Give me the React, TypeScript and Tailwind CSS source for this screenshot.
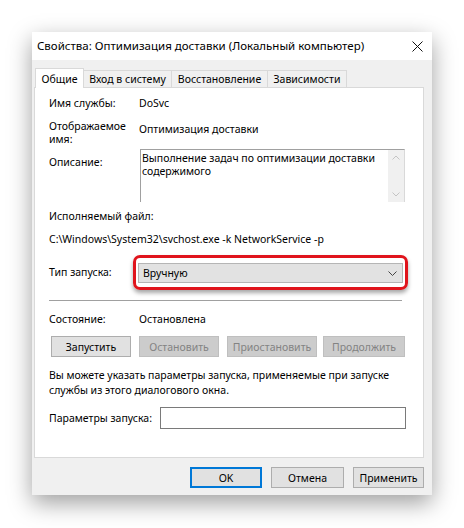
import React from "react";

function Btn({ label, w, disabled, primary }: { label: string; w: string; disabled?: boolean; primary?: boolean }) {
  return (
    <div
      className={`${w} h-[21px] flex items-center justify-center whitespace-nowrap ${
        primary
          ? "border-2 border-[#0078d7] bg-[#e1e1e1] text-black"
          : disabled
          ? "border border-[#bfbfbf] bg-[#cccccc] text-[#838383]"
          : "border border-[#adadad] bg-[#e1e1e1] text-black"
      }`}
    >
      {label}
    </div>
  );
}

export default function App() {
  return (
    <div className="w-[464px] h-[528px] bg-white overflow-hidden text-[10.5px] text-black font-['Noto_Sans',sans-serif] leading-[16px]">
      <div className="ml-[32px] mt-[32px] w-[400px] h-[463px] bg-[#f0f0f0] shadow-[0_8px_22px_rgba(0,0,0,0.38)] flex flex-col">
        {/* title bar */}
        <div className="h-[28px] bg-white flex items-center justify-between pl-[5px] pr-[9px] text-[11.5px]">
          <span className="whitespace-nowrap">Свойства: Оптимизация доставки (Локальный компьютер)</span>
          <svg width="11" height="11" viewBox="0 0 11 11">
            <path d="M0.5 0.5 L10.5 10.5 M10.5 0.5 L0.5 10.5" stroke="#111" strokeWidth="1" />
          </svg>
        </div>

        {/* tabs */}
        <div className="mt-[8px] ml-[3px] flex items-end h-[20px] relative z-10 whitespace-nowrap">
          <div className="w-[49px] h-[20px] bg-white border border-b-0 border-[#d9d9d9] flex items-center justify-center">Общие</div>
          <div className="w-[88px] h-[18px] border border-l-0 border-[#d9d9d9] flex items-center justify-center">Вход в систему</div>
          <div className="w-[96px] h-[18px] border border-l-0 border-[#d9d9d9] flex items-center justify-center">Восстановление</div>
          <div className="w-[79px] h-[18px] border border-l-0 border-[#d9d9d9] flex items-center justify-center">Зависимости</div>
        </div>

        {/* panel */}
        <div className="-mt-[1px] ml-[2px] w-[390px] h-[371px] bg-white border border-[#d9d9d9] pl-[14px] flex flex-col">
          <div className="mt-[7px] flex h-[16px] whitespace-nowrap">
            <div className="w-[90px]">Имя службы:</div>
            <div>DoSvc</div>
          </div>

          <div className="mt-[9px] flex whitespace-nowrap">
            <div className="w-[90px] leading-[13px]">
              Отображаемое
              <br />
              имя:
            </div>
            <div className="mt-[1px]">Оптимизация доставки</div>
          </div>

          <div className="mt-[3px] flex">
            <div className="w-[91px] mt-[5px] whitespace-nowrap">Описание:</div>
            <div className="w-[265px] h-[53px] border border-[#a0a0a0] border-r-[#d9d9d9] border-b-0 flex">
              <div className="flex-1 pl-[1px] pt-[2px] leading-[13px]">
                Выполнение задач по оптимизации доставки содержимого
              </div>
              <div className="w-[16px] bg-[#f0f0f0] flex flex-col items-center justify-between py-[5px]">
                <svg width="8" height="5" viewBox="0 0 8 5">
                  <path d="M0.5 4.5 L4 1 L7.5 4.5" fill="none" stroke="#c4c4c4" strokeWidth="1" />
                </svg>
                <svg width="8" height="5" viewBox="0 0 8 5">
                  <path d="M0.5 0.5 L4 4 L7.5 0.5" fill="none" stroke="#c4c4c4" strokeWidth="1" />
                </svg>
              </div>
            </div>
          </div>

          <div className="mt-[6px] h-[16px]">Исполняемый файл:</div>
          <div className="mt-[7px] h-[16px] whitespace-nowrap">C:\Windows\System32\svchost.exe -k NetworkService -p</div>

          <div className="mt-[8px] flex items-center">
            <div className="w-[84px] mt-[-1px] whitespace-nowrap">Тип запуска:</div>
            <div className="w-[275px] h-[35px] border-[3px] border-[#e0141c] rounded-[7px] pt-[5px] pb-[4px] px-[2px] shadow-[0_3px_4px_rgba(0,0,0,0.35)]">
              <div className="h-[20px] bg-[#e2e2e2] border border-[#b5b5b5] flex items-center justify-between pl-[4px] pr-[5px]">
                <span>Вручную</span>
                <svg width="9" height="5" viewBox="0 0 9 5">
                  <path d="M0.5 0.5 L4.5 4.5 L8.5 0.5" fill="none" stroke="#444" strokeWidth="1" />
                </svg>
              </div>
            </div>
          </div>

          <div className="mt-[10px] w-[353px] h-[1px] bg-[#a0a0a0]" />

          <div className="mt-[10px] flex h-[16px] whitespace-nowrap">
            <div className="w-[90px]">Состояние:</div>
            <div>Остановлена</div>
          </div>

          <div className="mt-[9px] ml-[2px] flex">
            <Btn label="Запустить" w="w-[80px]" />
            <div className="w-[8px]" />
            <Btn label="Остановить" w="w-[80px]" disabled />
            <div className="w-[8px]" />
            <Btn label="Приостановить" w="w-[90px]" disabled />
            <div className="w-[6px]" />
            <Btn label="Продолжить" w="w-[82px]" disabled />
          </div>

          <div className="mt-[11px] leading-[15px] w-[362px]">
            Вы можете указать параметры запуска, применяемые при запуске службы из этого диалогового окна.
          </div>

          <div className="mt-[9px] flex items-center">
            <div className="w-[111px] whitespace-nowrap">Параметры запуска:</div>
            <div className="w-[246px] h-[22px] border border-[#7a7a7a] bg-white" />
          </div>
        </div>

        {/* footer */}
        <div className="mt-[9px] flex ml-[158px]">
          <Btn label="OK" w="w-[72px]" primary />
          <div className="w-[9px]" />
          <Btn label="Отмена" w="w-[73px]" />
          <div className="w-[9px]" />
          <Btn label="Применить" w="w-[71px]" />
        </div>
      </div>
    </div>
  );
}
